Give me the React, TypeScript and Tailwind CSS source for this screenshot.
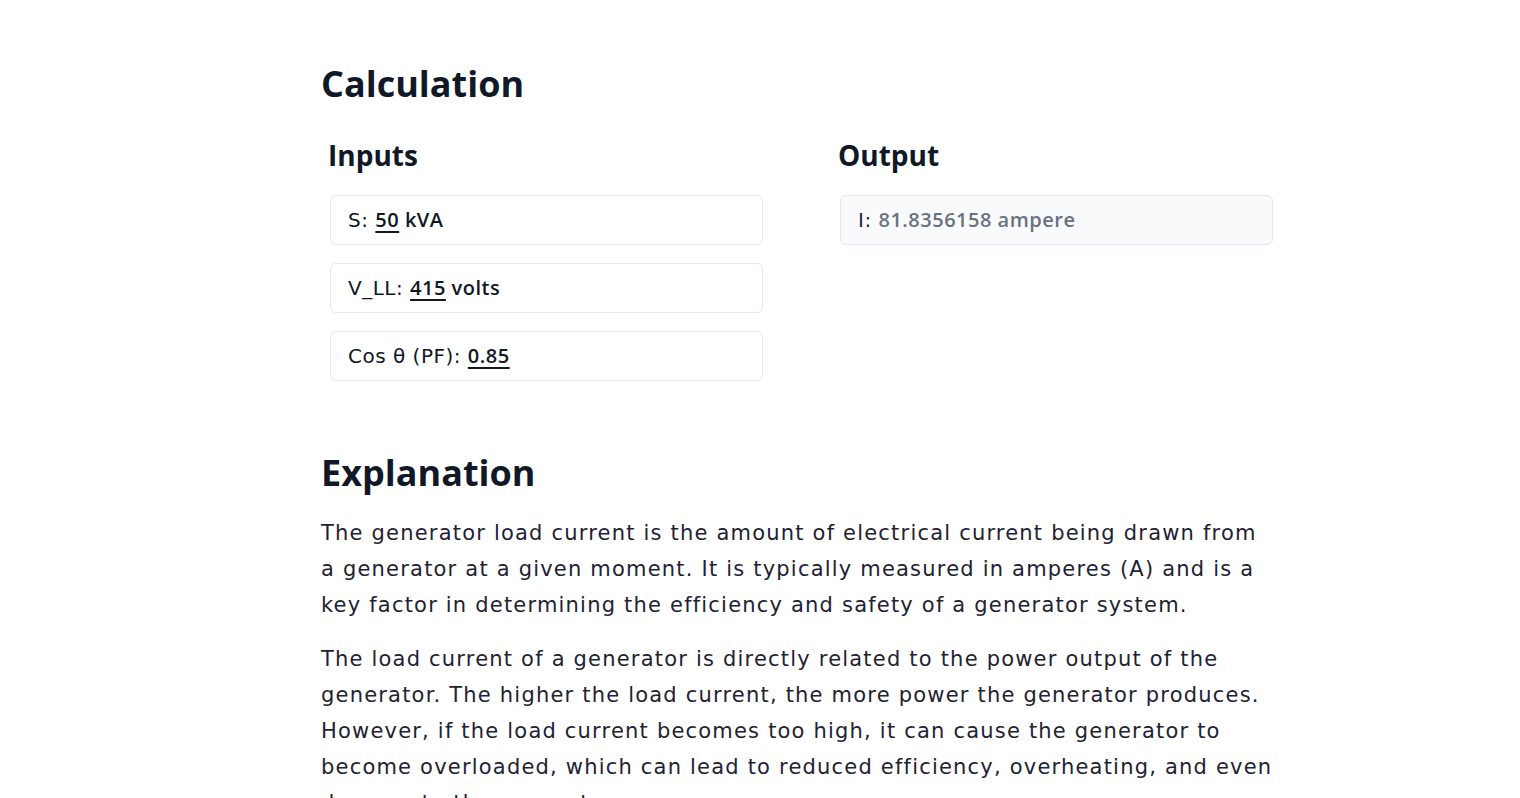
// Generator load current calculator page: calculation inputs/output and an explanation.

const heading = "font-['Open_Sans','Liberation_Sans',sans-serif]";
const body = "font-['DejaVu_Sans','Open_Sans',sans-serif]";
const strong = "font-['Open_Sans','Liberation_Sans',sans-serif] font-semibold";

function InputCard({ label, value, unit }: { label: string; value: string; unit?: string }) {
  return (
    <div className={`flex h-[50px] items-center rounded-md border border-gray-200 bg-white px-[17px] text-[20px] tracking-[0.5px] text-gray-900 ${body}`}>
      <span>{label}:&nbsp;</span>
      <span className={`${strong} underline decoration-2 underline-offset-4`}>{value}</span>
      {unit && <span className={strong}>&nbsp;{unit}</span>}
    </div>
  );
}

export default function App() {
  return (
    <div className={`min-h-screen bg-white text-gray-900 ${heading}`}>
      <main className="ml-[321px] w-[952px] pt-[62px]">
        <h2 className="text-[36px] font-bold leading-[44px] text-[#111827]">Calculation</h2>

        <div className="mt-[31px] ml-[9px] flex gap-[77px]">
          <section className="w-[433px]">
            <h3 className="-ml-[2px] text-[28px] font-bold leading-[36px] text-[#111827]">Inputs</h3>
            <div className="mt-[22px] flex flex-col gap-[18px]">
              <InputCard label="S" value="50" unit="kVA" />
              <InputCard label="V_LL" value="415" unit="volts" />
              <InputCard label="Cos θ (PF)" value="0.85" />
            </div>
          </section>
          <section className="w-[433px]">
            <h3 className="-ml-[2px] text-[28px] font-bold leading-[36px] text-[#111827]">Output</h3>
            <div className={`mt-[22px] flex h-[50px] items-center rounded-md border border-gray-200 bg-gray-50 px-[17px] text-[20px] tracking-[0.5px] ${body}`}>
              <span className="text-gray-800">I:&nbsp;</span>
              <span className={`${strong} text-gray-500`}>81.8356158 ampere</span>
            </div>
          </section>
        </div>

        <h2 className="mt-[70px] text-[36px] font-bold leading-[44px] text-[#111827]">Explanation</h2>
        <div className={`mt-[20px] flex w-[1000px] flex-col gap-[18px] text-[21px] leading-[36px] tracking-[1.2px] text-[#1f2233] ${body}`}>
          <p>
            The generator load current is the amount of electrical current being drawn from
            <br />
            a generator at a given moment. It is typically measured in amperes (A) and is a
            <br />
            key factor in determining the efficiency and safety of a generator system.
          </p>
          <p>
            The load current of a generator is directly related to the power output of the
            <br />
            generator. The higher the load current, the more power the generator produces.
            <br />
            However, if the load current becomes too high, it can cause the generator to
            <br />
            become overloaded, which can lead to reduced efficiency, overheating, and even
            <br />
            damage to the generator.
          </p>
        </div>
      </main>
    </div>
  );
}
